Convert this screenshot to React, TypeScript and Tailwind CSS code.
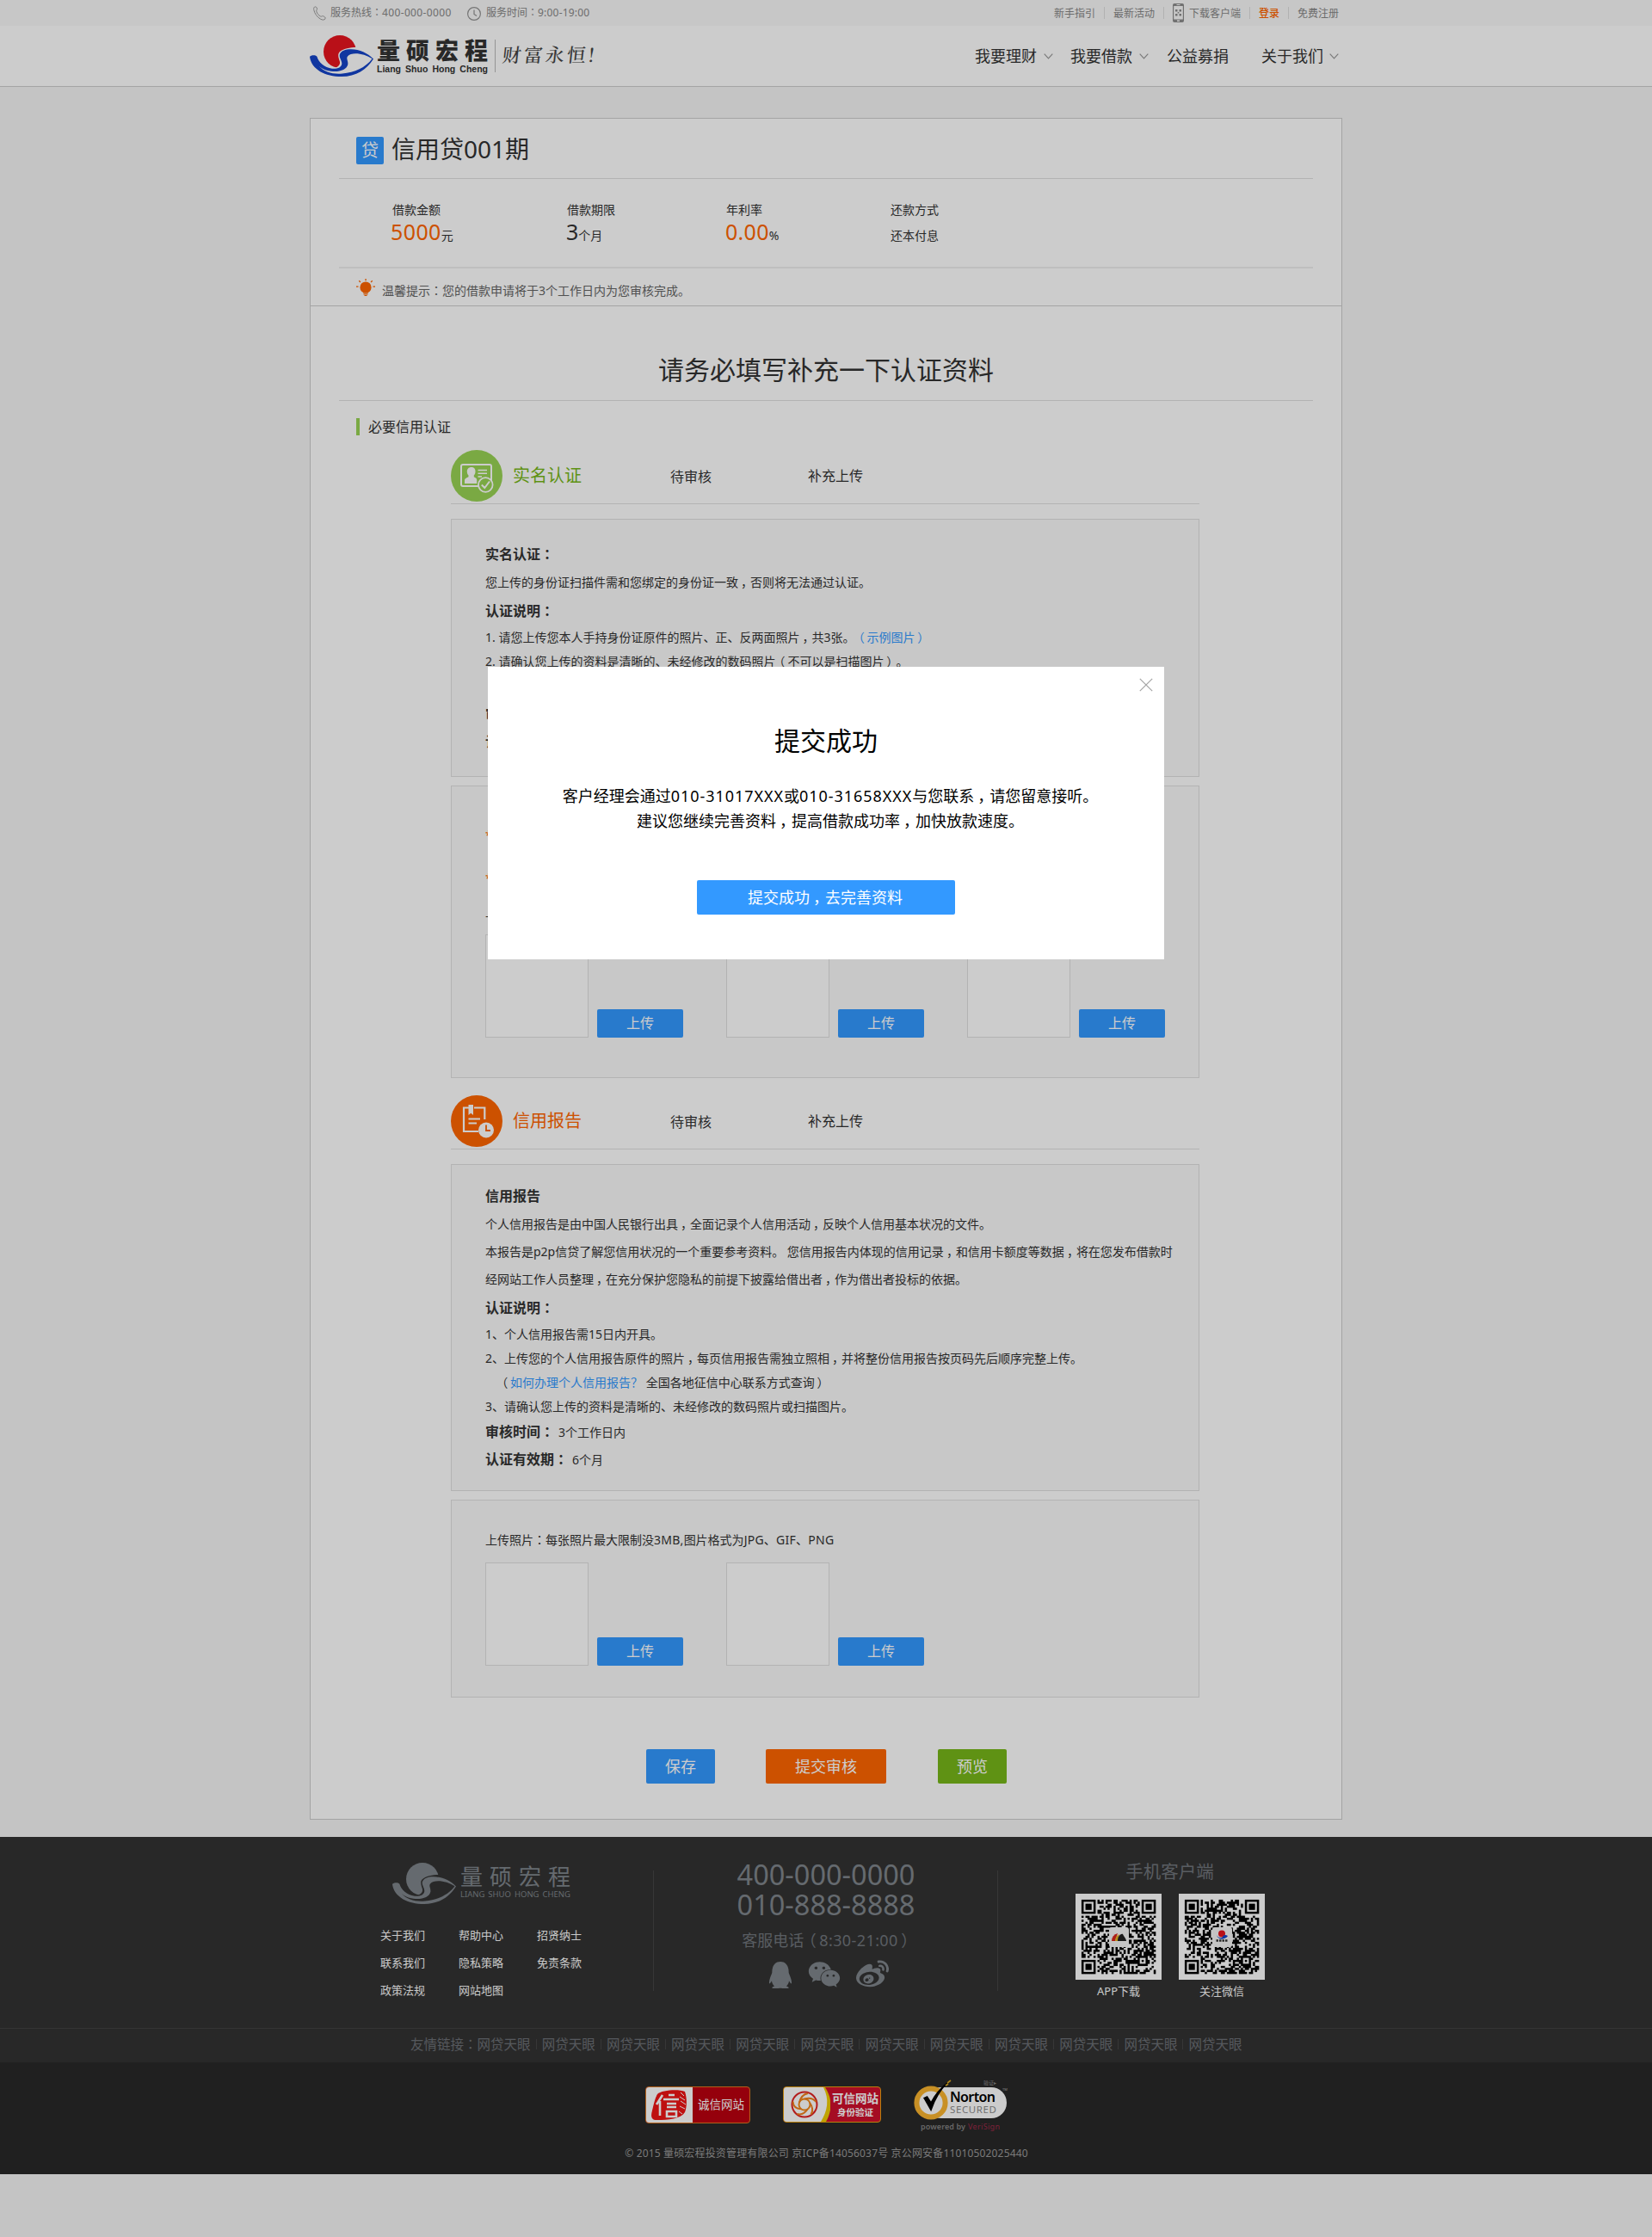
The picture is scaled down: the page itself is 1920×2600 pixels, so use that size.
import React from "react";
import { FaQq, FaWeixin, FaWeibo } from "react-icons/fa";

/* ---------- logo ---------- */
function Swoosh({ sun, wave, hole }: { sun: string; wave: string; hole: string }) {
  return (
    <svg viewBox="0 0 74 48" className="block h-[48px] w-[74px] shrink-0">
      <circle cx="35" cy="19" r="19" fill={sun} />
      <path
        d="M54.5 14C47 14 38.500 15.500 34.500 19.500C31.500 23 34.500 28 35 31C35.500 35 32 38 26 38.500L40 44L60 34Z"
        fill={hole}
      />
      <path
        d="M0 25C1 23 7.500 22.500 8.500 25C10 31 17 37.500 26 38.700C32 39.200 37 37.500 37.300 33C37.500 29.500 34 26 34.800 22.500C36 18 42 16.200 48 16.300C58 16.500 67 20.500 74 27.500C66 40 54 48 37 48C18 48 2 40 0 25Z"
        fill={wave}
      />
      <path
        d="M44 24.500C42 27 45 30 44.300 34C43 39.500 36 42.500 27 42C20 41.500 14 39 10.500 35.500C17 43 27 45.500 38 44.500C52 43.500 65 37.500 72.500 27.300C63 20.500 48 19 44 24.500Z"
        fill={hole}
      />
    </svg>
  );
}

/* ---------- small icons ---------- */
const PhoneIcon = () => (
  <svg viewBox="0 0 15 17" className="h-[17px] w-[15px]" fill="none" stroke="#9a9a9a" strokeWidth="1">
    <path d="M1.500 1.200C3 .2 4.200 1.500 4.500 3.200C4.700 4.500 3.300 4.500 3.800 6.200C4.500 8.700 6.500 11 8.500 12C10 12.700 10.300 11.200 11.500 11.700C13.300 12.400 14.800 13.500 14 14.800C13 16.300 10.800 16.600 8.300 15C4.500 12.700 1.500 8.500 .8 4.500C.6 3 .6 1.800 1.500 1.200Z" />
  </svg>
);
const ClockIcon = () => (
  <svg viewBox="0 0 16 16" className="h-[16px] w-[16px]" fill="none" stroke="#929292" strokeWidth="1.200">
    <circle cx="8" cy="8" r="7.400" />
    <path d="M8 3.500V8.500L11 10.500" />
  </svg>
);
const MobileIcon = () => (
  <svg viewBox="0 0 13 22" className="h-[22px] w-[13px]">
    <rect width="13" height="22" rx="2" fill="#8c8c8c" />
    <rect x="1.200" y="3" width="10.600" height="15.500" fill="#fafafa" />
    <rect x="4.500" y="1" width="4" height="1" fill="#fafafa" />
    <rect x="5" y="19.500" width="3" height="1.500" fill="#fafafa" />
    <path d="M3 7h2.500v2.500H3zM7.500 7H10v2.500H7.500zM3 12h2.500v2.500H3zM7.500 12H10v2.500H7.500zM5.700 10h1.600v1.500H5.700z" fill="#8c8c8c" />
  </svg>
);
const Chevron = () => (
  <svg viewBox="0 0 11 7" className="h-[7px] w-[11px]" fill="none" stroke="#999" strokeWidth="1.200">
    <path d="M.7 .7L5.500 5.800L10.300 .7" />
  </svg>
);
const BulbIcon = () => (
  <svg viewBox="0 0 22 20" className="h-[20px] w-[22px]" fill="#ff6600">
    <circle cx="11" cy="10" r="6.600" />
    <path d="M8 15h6v1.600H8zM8.500 17.200h5v1.200h-5zM9.500 19h3v1h-3z" />
    <path d="M10.400 0h1.300v2.300h-1.300zM0 8.500h2.500v1.300H0zM19.500 8.500H22v1.300h-2.500zM2.800 2.700l.9-.9 1.700 1.700-.9.9zM18.300 1.800l.9.900-1.700 1.700-.9-.9z" />
  </svg>
);
const IdIcon = () => (
  <svg viewBox="0 0 60 60" className="block h-[60px] w-[60px] shrink-0">
    <circle cx="30" cy="30" r="30" fill="#99d454" />
    <rect x="12" y="17" width="35" height="25" rx="2" fill="none" stroke="#fff" strokeWidth="2" />
    <path
      d="M24 20c3.200 0 4.600 2.200 4.500 5c0 2-.8 3.500-1.700 4.500v1.800c1.500 1 3.400 1.400 3.400 3.500V39H16v-3.700c0-2.300 3-3 4.500-4v-1.800c-1-1-1.600-2.500-1.700-4.500c0-2.800 1.700-5 5.200-5Z"
      fill="#fff"
    />
    <path d="M31.500 23.500H42M31.500 27.300H42M31.500 31H36" stroke="#fff" strokeWidth="1.500" />
    <circle cx="40.300" cy="40.500" r="8.300" fill="#99d454" stroke="#fff" strokeWidth="1.800" />
    <path d="M35.800 40.500L39.300 44L45 36.500" fill="none" stroke="#fff" strokeWidth="2" />
  </svg>
);
const ReportIcon = () => (
  <svg viewBox="0 0 60 60" className="block h-[60px] w-[60px] shrink-0">
    <circle cx="30" cy="30" r="30" fill="#ff6600" />
    <path d="M21 14.500H15V42h17M27 14.500h12.300V28" fill="none" stroke="#fff" strokeWidth="2.200" />
    <path d="M20.500 11h5.500v12l-2.700-2.200L20.500 23z" fill="#fff" />
    <path d="M20.500 27.500H34M20.500 32.500H30" stroke="#fff" strokeWidth="1.800" />
    <circle cx="41" cy="40.500" r="9" fill="#fff" />
    <path d="M41 34.500V41h5" fill="none" stroke="#ff6600" strokeWidth="1.800" />
  </svg>
);

/* ---------- QR code ---------- */
function Qr({ seed, children }: { seed: number; children: React.ReactNode }) {
  const n = 37;
  let s = seed;
  const next = () => {
    s ^= s << 13;
    s ^= s >>> 17;
    s ^= s << 5;
    return (s >>> 9) & 1;
  };
  const finder = (x: number, y: number) => {
    const m = Math.max(Math.abs(x - 3), Math.abs(y - 3));
    return m === 3 || m <= 1;
  };
  let d = "";
  for (let y = 0; y < n; y++) {
    for (let x = 0; x < n; x++) {
      let on = next() === 1;
      if (x < 8 && y < 8) on = x < 7 && y < 7 && finder(x, y);
      else if (x > n - 9 && y < 8) on = x > n - 8 && y < 7 && finder(x - n + 7, y);
      else if (x < 8 && y > n - 9) on = x < 7 && y > n - 8 && finder(x, y - n + 7);
      else if (x > 27 && x < 33 && y > 27 && y < 33) {
        const m = Math.max(Math.abs(x - 30), Math.abs(y - 30));
        on = m !== 1;
      } else if (x > 13 && x < 23 && y > 13 && y < 23) on = false;
      if (on) d += `M${x} ${y}h1v1h-1z`;
    }
  }
  return (
    <svg viewBox="0 0 100 100" className="block h-[100px] w-[100px] bg-white">
      <g transform="translate(7 7) scale(2.33)">
        <path d={d} fill="#000" stroke="#000" strokeWidth="0.080" />
      </g>
      <rect x="39" y="39" width="23" height="23" rx="3" fill="#f6f6f6" />
      {children}
    </svg>
  );
}

/* ---------- text ---------- */
/* Places full-width punctuation nearer to the middle of its cell */
const PUNCT: Record<string, string> = {
  "：": "leading-none [font-family:'Noto_Sans_CJK_JP',sans-serif]",
  "，": "pl-[0.22em] -mr-[0.22em]",
  "（": "-ml-[0.2em] pr-[0.2em]",
  "）": "pl-[0.2em] -mr-[0.2em]",
};
function T({ children }: { children: React.ReactNode }) {
  return (
    <>
      {React.Children.map(children, (c) =>
        typeof c === "string"
          ? c.split(/([：，（）])/).map((p, i) => (PUNCT[p] ? <span key={i} className={PUNCT[p]}>{p}</span> : p))
          : c
      )}
    </>
  );
}

/* ---------- building blocks ---------- */
const Row = ({ className = "", children }: { className?: string; children: React.ReactNode }) => (
  <div className={`h-[28px] whitespace-pre text-[14px] leading-[28px] ${className}`}><T>{children}</T></div>
);
const Head = ({ children }: { children: React.ReactNode }) => (
  <span className="text-[16px] font-bold"><T>{children}</T></span>
);

function Photos({ count }: { count: number }) {
  return (
    <div className="flex gap-[50px]">
      {Array.from({ length: count }, (_, i) => (
        <div key={i} className="flex items-end gap-[10px]">
          <div className="h-[120px] w-[120px] border border-[#e0e0e0] bg-white" />
          <button className="h-[33px] w-[100px] rounded-[2px] bg-[#3399ff] text-[16px] leading-[33px] text-white">上传</button>
        </div>
      ))}
    </div>
  );
}

function SectionHead({ icon, title, color }: { icon: React.ReactNode; title: string; color: string }) {
  return (
    <div className="flex h-[63px] border-b border-[#e0e0e0]">
      {icon}
      <span className={`ml-[12px] w-[183px] text-[20px] leading-[60px] ${color}`}>{title}</span>
      <span className="w-[160px] text-[16px] leading-[63px]">待审核</span>
      <span className="text-[16px] leading-[61px]">补充上传</span>
    </div>
  );
}

const Stat = ({ w, label, children }: { w: string; label: string; children: React.ReactNode }) => (
  <div className={w}>
    <div className="h-[20px] text-[14px] leading-[20px]">{label}</div>
    <div className="flex h-[40px] items-baseline text-[14px] leading-[31px]">{children}</div>
  </div>
);

const Sep = () => <i className="h-[14px] w-px bg-[#dedede]" />;

export default function App() {
  return (
    <div className="relative h-[2600px] w-[1920px] overflow-hidden bg-[#f5f5f5] text-[#333] [font-family:'Noto_Sans','Noto_Sans_CJK_SC',sans-serif] [text-spacing-trim:space-all]">
      {/* top bar */}
      <div className="h-[30px] bg-[#f9f9f9]">
        <div className="mx-auto flex h-[30px] w-[1200px] text-[12px] leading-[30px] text-[#888]">
          <div className="ml-[4px] w-[20px] pt-[7px]"><PhoneIcon /></div>
          <span className="w-[159px]"><T>服务热线：</T><span className="tracking-[0.350px]">400-000-0000</span></span>
          <div className="w-[22px] pt-[8px]"><ClockIcon /></div>
          <span><T>服务时间：</T><span className="tracking-[0.200px]">9:00-19:00</span></span>
          <div className="mr-[4px] ml-auto flex h-[30px] items-center gap-[10px] leading-[29px]">
            <span>新手指引</span>
            <Sep />
            <span>最新活动</span>
            <Sep />
            <span className="flex items-center gap-[6px]"><MobileIcon />下载客户端</span>
            <Sep />
            <span className="font-medium text-[#ff6600]">登录</span>
            <Sep />
            <span>免费注册</span>
          </div>
        </div>
      </div>

      {/* header */}
      <div className="h-[71px] border-b border-[#cdcdcd] bg-white">
        <div className="mx-auto flex w-[1200px] items-start">
          <div className="pt-[11px]"><Swoosh sun="#e8141f" wave="#1444c8" hole="#fff" /></div>
          <div className="ml-[4px] w-[137px] pt-[14px]">
            <div className="h-[30px] text-[27px] leading-[30px] font-black tracking-[7px] whitespace-nowrap">量硕宏程</div>
            <div className="flex h-[12px] justify-between pr-[8px] text-[10.500px] leading-[12px] font-bold [font-family:'Liberation_Sans',Arial,sans-serif]">
              <span>Liang</span><span>Shuo</span><span>Hong</span><span>Cheng</span>
            </div>
          </div>
          <div className="mt-[16px] h-[38px] w-px bg-[#bbb]" />
          <div className="mt-[17px] ml-[8px] -skew-x-6 text-[22px] leading-[32px] font-medium tracking-[3px] text-[#444] [font-family:'Noto_Serif_CJK_SC','Kaiti_SC',KaiTi,'Noto_Sans_CJK_SC',serif]">财富永恒!</div>
          <nav className="mr-[4px] ml-auto flex h-[70px] items-center text-[18px]">
            <span className="mr-[8px]">我要理财</span><Chevron />
            <span className="mr-[8px] ml-[20px]">我要借款</span><Chevron />
            <span className="ml-[21px]">公益募捐</span>
            <span className="mr-[7px] ml-[38px]">关于我们</span><Chevron />
          </nav>
        </div>
      </div>

      {/* main card */}
      <main className="mx-auto mt-[36px] h-[1978px] w-[1200px] border border-[#cdcdcd] bg-white">
        <div className="flex h-[69px] items-center pt-[1px] pl-[53px]">
          <span className="mt-[3px] h-[32px] w-[32px] rounded-[2px] bg-[#3399ff] text-center text-[20px] leading-[31px] text-white">贷</span>
          <span className="ml-[9px] text-[28px] leading-[40px]">信用贷001期</span>
        </div>
        <div className="mx-[33px] h-px bg-[#e0e0e0]" />
        <div className="flex h-[102px] pt-[26px] pl-[95px]">
          <Stat w="w-[203px]" label="借款金额"><b className="-ml-[2px] text-[25px] font-normal tracking-[0.400px] text-[#ff6600]">5000</b>元</Stat>
          <Stat w="w-[185px]" label="借款期限"><b className="-ml-[1px] text-[25px] font-normal">3</b>个月</Stat>
          <Stat w="w-[191px]" label="年利率"><b className="-ml-[1px] text-[25px] font-normal tracking-[0.300px] text-[#ff6600]">0.00</b>%</Stat>
          <Stat w="w-[120px]" label="还款方式"><b className="w-0 overflow-hidden text-[25px] font-normal">&nbsp;</b>还本付息</Stat>
        </div>
        <div className="mx-[33px] h-[2px] bg-[#efefef]" />
        <div className="flex h-[44px] border-b border-[#cdcdcd] pt-[12px] pl-[53px]">
          <BulbIcon />
          <span className="ml-[8px] text-[14px] leading-[28px] text-[#666]"><T>温馨提示：您的借款申请将于3个工作日内为您审核完成。</T></span>
        </div>

        <h1 className="mt-[49px] h-[50px] text-center text-[30px] leading-[50px]">请务必填写补充一下认证资料</h1>
        <div className="mx-[33px] mt-[10px] h-px bg-[#e0e0e0]" />
        <div className="mt-[20px] ml-[53px] flex h-[20px] items-center">
          <i className="h-[20px] w-[4px] bg-[#99d454]" />
          <span className="ml-[10px] text-[16px] leading-[20px]">必要信用认证</span>
        </div>

        <div className="mt-[17px] ml-[163px] w-[870px]">
          <SectionHead icon={<IdIcon />} title="实名认证" color="text-[#77b719]" />
          <div className="mt-[17px] h-[300px] border border-[#e0e0e0] bg-[#fafafa] pt-[26px] pl-[39px]">
            <Row><Head>实名认证：</Head></Row>
            <Row className="mt-[5px]">您上传的身份证扫描件需和您绑定的身份证一致，否则将无法通过认证。</Row>
            <Row className="mt-[5px]"><Head>认证说明：</Head></Row>
            <Row className="mt-[3px]">1. 请您上传您本人手持身份证原件的照片、正、反两面照片，共3张。<span className="text-[#3399ff]"><T>（示例图片）</T></span></Row>
            <Row>2. 请确认您上传的资料是清晰的、未经修改的数码照片（不可以是扫描图片）。</Row>
            <Row className="mt-[33px]"><Head>审核时间：</Head></Row>
            <Row className="mt-[4px]"><Head>认证有效期：</Head></Row>
          </div>
          <div className="mt-[10px] h-[340px] border border-[#e0e0e0] bg-[#fafafa] pt-[43px] pl-[39px]">
            <Row className="text-[#ff6600]">*</Row>
            <Row className="mt-[22px] text-[#ff6600]">*</Row>
            <Row className="mt-[11px]">上传照片</Row>
            <div className="mt-[12px]"><Photos count={3} /></div>
          </div>

          <div className="mt-[20px]"><SectionHead icon={<ReportIcon />} title="信用报告" color="text-[#ff6600]" /></div>
          <div className="mt-[17px] h-[380px] border border-[#e0e0e0] bg-[#fafafa] pt-[22px] pl-[39px]">
            <Row><Head>信用报告</Head></Row>
            <Row className="mt-[5px]">个人信用报告是由中国人民银行出具，全面记录个人信用活动，反映个人信用基本状况的文件。</Row>
            <Row className="mt-[4px]">本报告是p2p信贷了解您信用状况的一个重要参考资料。 您信用报告内体现的信用记录，和信用卡额度等数据，将在您发布借款时</Row>
            <Row className="mt-[4px]">经网站工作人员整理，在充分保护您隐私的前提下披露给借出者，作为借出者投标的依据。</Row>
            <Row className="mt-[5px]"><Head>认证说明：</Head></Row>
            <Row className="mt-[3px]">1、个人信用报告需15日内开具。</Row>
            <Row>2、上传您的个人信用报告原件的照片，每页信用报告需独立照相，并将整份信用报告按页码先后顺序完整上传。</Row>
            <Row className="pl-[15px]">（<span className="text-[#3399ff]">如何办理个人信用报告？</span> 全国各地征信中心联系方式查询）</Row>
            <Row>3、请确认您上传的资料是清晰的、未经修改的数码照片或扫描图片。</Row>
            <Row className="mt-px"><Head>审核时间：</Head><span className="ml-[5px]">3个工作日内</span></Row>
            <Row className="mt-[4px]"><Head>认证有效期：</Head><span className="ml-[5px]">6个月</span></Row>
          </div>
          <div className="mt-[10px] h-[230px] border border-[#e0e0e0] bg-[#fafafa] pt-[32px] pl-[39px]">
            <Row>上传照片：每张照片最大限制没<span className="tracking-[0.300px]">3MB,</span>图片格式为<span className="tracking-[0.250px]">JPG、GIF、PNG</span></Row>
            <div className="mt-[12px]"><Photos count={2} /></div>
          </div>
        </div>

        <div className="mt-[60px] ml-[390px] flex text-[18px] leading-[40px] text-white">
          <button className="h-[40px] w-[80px] rounded-[2px] bg-[#3399ff]">保存</button>
          <button className="ml-[59px] h-[40px] w-[140px] rounded-[2px] bg-[#ff6600]">提交审核</button>
          <button className="ml-[60px] h-[40px] w-[80px] rounded-[2px] bg-[#77b719]">预览</button>
        </div>
      </main>

      {/* footer */}
      <footer className="mt-[20px]">
        <div className="h-[222px] bg-[#333]">
          <div className="mx-auto flex w-[1200px]">
            <div className="w-[399px]">
              <div className="flex pt-[30px] pl-[96px] text-[#7f858b]">
                <Swoosh sun="#7f858b" wave="#7f858b" hole="#333" />
                <div className="ml-[5px] w-[128px] pt-[2px]">
                  <div className="h-[28px] text-[26px] leading-[28px] tracking-[8px] whitespace-nowrap">量硕宏程</div>
                  <div className="flex h-[12px] justify-between text-[9.500px] leading-[13px]">
                    <span>LIANG</span><span>SHUO</span><span>HONG</span><span>CHENG</span>
                  </div>
                </div>
              </div>
              <div className="mt-[20px] grid grid-cols-[91px_91px_91px] pl-[82px] text-[13px] leading-[32px] text-[#fafafa]">
                <span>关于我们</span><span>帮助中心</span><span>招贤纳士</span>
                <span>联系我们</span><span>隐私策略</span><span>免责条款</span>
                <span>政策法规</span><span>网站地图</span>
              </div>
            </div>
            <div className="mt-[39px] h-[140px] w-px bg-[#454545]" />
            <div className="flex w-[399px] flex-col items-center pl-[1px] whitespace-nowrap text-[#7f858b]">
              <div className="mt-[26px] h-[35px] text-[32.500px] leading-[35px]">400-000-0000</div>
              <div className="h-[36px] text-[32.500px] leading-[36px]">010-888-8888</div>
              <div className="mt-[9px] h-[28px] pl-[4px] text-[18px] leading-[28px] text-[#70757b]"><T>客服电话（</T><span className="tracking-[0.400px]">8:30-21:00</span><T>）</T></div>
              <div className="mt-[8px] flex h-[36px] items-center gap-[18px] pl-[6px]">
                <FaQq className="h-[31px] w-[28px]" />
                <FaWeixin className="h-[38px] w-[38px]" />
                <FaWeibo className="h-[38px] w-[38px]" />
              </div>
            </div>
            <div className="mt-[39px] h-[140px] w-px bg-[#454545]" />
            <div className="w-[400px] pl-[90px]">
              <div className="mt-[25px] w-[219px] text-center text-[20.500px] leading-[30px] text-[#70757b]">手机客户端</div>
              <div className="mt-[11px] flex gap-[20px] text-center text-[13px] leading-[27px] text-[#fafafa]">
                <div>
                  <Qr seed={42171}>
                    <path d="M42 55a9 9 0 0 1 7-9l-3 9z" fill="#d9261c" />
                    <path d="M46 55a9 9 0 0 1 5-8l-2 8z" fill="#e8b320" />
                    <path d="M49 55c0-5 3-9 6-8c1 3 4 5 4 8z" fill="#222" />
                  </Qr>
                  APP下载
                </div>
                <div>
                  <Qr seed={90731}>
                    <circle cx="50" cy="46.500" r="4" fill="#e8141f" />
                    <path d="M44 48c2 4 6 4 7 2s3-3 6-1c-2 4-11 6-13-1z" fill="#1444c8" />
                    <path d="M43.500 54.500h13" stroke="#333" strokeWidth="2.500" strokeDasharray="2.500 1" />
                  </Qr>
                  关注微信
                </div>
              </div>
            </div>
          </div>
        </div>

        <div className="h-[40px] border-t border-[#414141] bg-[#333]">
          <div className="flex pt-[7px] pl-[477px] text-[15.500px] leading-[22px] whitespace-nowrap text-[#6c7076]">
            <span className="w-[77.500px]"><T>友情链接：</T></span>
            {Array.from({ length: 12 }, (_, i) => (
              <span key={i} className="flex w-[75.200px] items-center">
                网贷天眼
                {i < 11 && <i className="ml-[6px] h-[12px] w-px bg-[#454545]" />}
              </span>
            ))}
          </div>
        </div>

        <div className="h-[130px] bg-[#292929]">
          <div className="ml-[750px] flex h-[94px] pt-[28px]">
            <div className="flex h-[43px] w-[122px] overflow-hidden rounded-[4px] border border-[#e07820] bg-[#bb0010]">
              <div className="flex w-[54px] items-center justify-center bg-white">
                <svg viewBox="0 0 46 38" className="h-[38px] w-[46px]">
                  <path d="M9 6C14 1 34 0 41 3C44 12 43 22 41 27C36 35 22 36 8 36C2 36 1 32 3 25C5 17 6 11 9 6Z" fill="#ee1414" />
                  <path d="M36 4l4 4M35 9l6 4M36 14l6 4M35 20l6 3M34 26l4 3" stroke="#fff" strokeWidth="1" />
                  <path d="M15 7L8 18M12 14V31M22 7h7M16 12h18M20 17h11M20 21h11M20 26h11v6H20z" stroke="#fff" strokeWidth="2.600" fill="none" />
                </svg>
              </div>
              <span className="flex-1 text-center text-[13.500px] leading-[41px] text-white">诚信网站</span>
            </div>
            <div className="ml-[38px] flex h-[42px] w-[114px] overflow-hidden rounded-[4px] border border-[#e8a010] bg-[#cf0f2c]">
              <svg viewBox="0 0 54 40" className="h-[40px] w-[54px] shrink-0">
                <path d="M0 0H48C57 14 56 27 49 40H0Z" fill="#f0cc00" />
                <path d="M0 0H46C53 14 51 27 43 40H0Z" fill="#fff" />
                <g fill="none" strokeWidth="2">
                  <circle cx="24" cy="20" r="14.500" stroke="#e02424" />
                  <circle cx="24" cy="20" r="6.500" stroke="#f08a1c" />
                  <path
                    d="M24 13.500Q33 11 37.500 17M30.200 18Q35.500 25.500 31.500 31.500M27.800 25.300Q22.500 33 15.500 31M20.200 25.300Q11 25 10.500 16.500M17.800 18Q20 8.500 28 7"
                    stroke="#f0801c"
                  />
                </g>
              </svg>
              <div className="flex-1 pt-[4px] text-center whitespace-nowrap text-white">
                <div className="text-[13.500px] leading-[18px] font-bold">可信网站</div>
                <div className="text-[10.500px] leading-[14px] font-bold">身份验证</div>
              </div>
            </div>
            <svg viewBox="0 0 110 62" className="-mt-[9px] ml-[38px] h-[62px] w-[110px] [font-family:'Noto_Sans','Noto_Sans_CJK_SC',sans-serif]">
              <rect x="14" y="10" width="94" height="36" rx="18" fill="#fff" />
              <circle cx="20" cy="28" r="16.600" fill="#fff" stroke="#fbb52f" strokeWidth="6" />
              <path d="M12 22.500L20 36.500C25 22 31 12 40 4C31 11 24 20 20 28L15.500 21Z" fill="#000" stroke="#000" strokeWidth="1.500" />
              <path d="M37 8l3-2M39 5l4-3" stroke="#d9a520" strokeWidth="1.600" />
              <text x="42" y="27" fontSize="16" fontWeight="600" fill="#000" textLength="53">Norton</text>
              <text x="42" y="40" fontSize="11.500" fill="#8c8c8c" textLength="54">SECURED</text>
              <text x="81" y="6.500" fontSize="6" fill="#888">验证▸</text>
              <text x="103" y="14" fontSize="4" fill="#aaa">TM</text>
              <text x="8" y="59" fontSize="9" fontWeight="600" fill="#828282" textLength="52">powered by</text>
              <text x="63" y="59" fontSize="9" fill="#9e2848" textLength="37">VeriSign</text>
            </svg>
          </div>
          <div className="pl-[1px] text-center text-[12px] leading-[24px] tracking-[0.160px] text-[#999]">© 2015 量硕宏程投资管理有限公司 京ICP备14056037号 京公网安备11010502025440</div>
        </div>
      </footer>

      {/* dimmed backdrop and dialog */}
      <div className="absolute inset-0 bg-black/20" />
      <div className="absolute top-[775px] left-[567px] h-[340px] w-[786px] bg-white text-center text-black">
        <svg viewBox="0 0 16 16" className="mt-[13px] mr-[13px] ml-auto block h-[16px] w-[16px]" stroke="#a4a4a4" strokeWidth="1.200">
          <path d="M.8 .8L15.200 15.200M15.200 .8L.8 15.200" />
        </svg>
        <div className="mt-[37px] h-[40px] text-[30px] leading-[40px]">提交成功</div>
        <div className="mt-[30px] text-[18px] leading-[28px]">
          <div className="h-[29px] pl-[10px]">
            客户经理会通过<span className="tracking-[0.950px]">010-31017XXX</span>或<span className="tracking-[0.950px]">010-31658XXX</span><T>与您联系，请您留意接听。</T>
          </div>
          <div className="pl-[10px]"><T>建议您继续完善资料，提高借款成功率，加快放款速度。</T></div>
        </div>
        <button className="mt-[55px] ml-[243px] block h-[40px] w-[300px] rounded-[2px] bg-[#3399ff] pr-[2px] text-[18px] leading-[40px] text-white"><T>提交成功，去完善资料</T></button>
      </div>
    </div>
  );
}
